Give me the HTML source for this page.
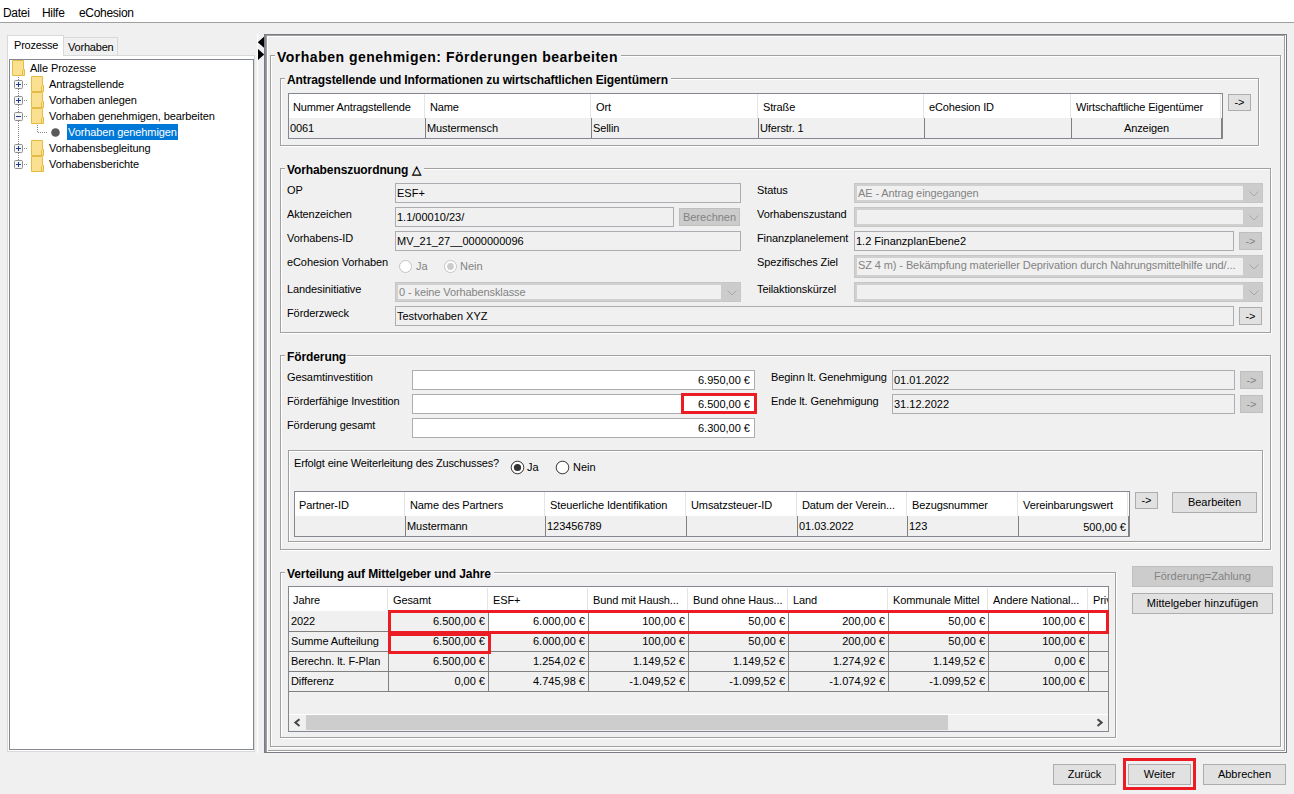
<!DOCTYPE html>
<html><head><meta charset="utf-8"><title>eCohesion</title>
<style>
html,body{margin:0;padding:0;}
body{width:1294px;height:794px;position:relative;overflow:hidden;background:#f0f0f0;font-family:"Liberation Sans",sans-serif;font-size:11px;color:#000;}
.a{position:absolute;}
.t{line-height:12px;white-space:nowrap;}
svg{display:block;}
</style></head><body>
<div class="a" style="left:0px;top:0px;width:1294px;height:22px;background:#ffffff;"></div>
<div class="a" style="left:0px;top:22px;width:1294px;height:1px;background:#a0a0a0;"></div>
<div class="a t" style="left:3px;top:7px;font-size:12px;letter-spacing:-0.3px;">Datei</div>
<div class="a t" style="left:42px;top:7px;font-size:12px;letter-spacing:-0.3px;">Hilfe</div>
<div class="a t" style="left:79px;top:7px;font-size:12px;letter-spacing:-0.3px;">eCohesion</div>
<div class="a" style="left:7px;top:55px;width:248px;height:697px;background:#ffffff;border:1px solid #d9d9d9;box-sizing:border-box;"></div>
<div class="a" style="left:63px;top:37px;width:55px;height:19px;background:#f0f0f0;border:1px solid #d9d9d9;box-sizing:border-box;"></div>
<div class="a" style="left:7px;top:35px;width:57px;height:21px;background:#ffffff;border:1px solid #d9d9d9;box-sizing:border-box;border-bottom:none;"></div>
<div class="a t" style="left:14px;top:39px;letter-spacing:-0.2px;">Prozesse</div>
<div class="a t" style="left:68px;top:41px;letter-spacing:-0.2px;">Vorhaben</div>
<div class="a" style="left:9px;top:59px;width:245px;height:691px;background:#ffffff;border:1px solid #828790;box-sizing:border-box;"></div>
<svg class="a" style="left:12px;top:60px" width="13" height="16"><path d="M0.5 0.5 H11.5 V9.5 H12.5 V15.5 H0.5 Z" fill="#fbe08f" stroke="#e3bb45"/><path d="M10.5 10 V15" stroke="#e3bb45"/></svg>
<div class="a t" style="left:30px;top:62px;letter-spacing:-0.1px;">Alle Prozesse</div>
<div class="a" style="left:18px;top:77px;width:1px;height:1px;background:#8a8a8a;"></div>
<div class="a" style="left:18px;top:79px;width:1px;height:1px;background:#8a8a8a;"></div>
<div class="a" style="left:18px;top:81px;width:1px;height:1px;background:#8a8a8a;"></div>
<div class="a" style="left:18px;top:83px;width:1px;height:1px;background:#8a8a8a;"></div>
<div class="a" style="left:18px;top:85px;width:1px;height:1px;background:#8a8a8a;"></div>
<div class="a" style="left:18px;top:87px;width:1px;height:1px;background:#8a8a8a;"></div>
<div class="a" style="left:18px;top:89px;width:1px;height:1px;background:#8a8a8a;"></div>
<div class="a" style="left:18px;top:91px;width:1px;height:1px;background:#8a8a8a;"></div>
<div class="a" style="left:18px;top:93px;width:1px;height:1px;background:#8a8a8a;"></div>
<div class="a" style="left:18px;top:95px;width:1px;height:1px;background:#8a8a8a;"></div>
<div class="a" style="left:18px;top:97px;width:1px;height:1px;background:#8a8a8a;"></div>
<div class="a" style="left:18px;top:99px;width:1px;height:1px;background:#8a8a8a;"></div>
<div class="a" style="left:18px;top:101px;width:1px;height:1px;background:#8a8a8a;"></div>
<div class="a" style="left:18px;top:103px;width:1px;height:1px;background:#8a8a8a;"></div>
<div class="a" style="left:18px;top:105px;width:1px;height:1px;background:#8a8a8a;"></div>
<div class="a" style="left:18px;top:107px;width:1px;height:1px;background:#8a8a8a;"></div>
<div class="a" style="left:18px;top:109px;width:1px;height:1px;background:#8a8a8a;"></div>
<div class="a" style="left:18px;top:111px;width:1px;height:1px;background:#8a8a8a;"></div>
<div class="a" style="left:18px;top:113px;width:1px;height:1px;background:#8a8a8a;"></div>
<div class="a" style="left:18px;top:115px;width:1px;height:1px;background:#8a8a8a;"></div>
<div class="a" style="left:18px;top:117px;width:1px;height:1px;background:#8a8a8a;"></div>
<div class="a" style="left:18px;top:119px;width:1px;height:1px;background:#8a8a8a;"></div>
<div class="a" style="left:18px;top:121px;width:1px;height:1px;background:#8a8a8a;"></div>
<div class="a" style="left:18px;top:123px;width:1px;height:1px;background:#8a8a8a;"></div>
<div class="a" style="left:18px;top:125px;width:1px;height:1px;background:#8a8a8a;"></div>
<div class="a" style="left:18px;top:127px;width:1px;height:1px;background:#8a8a8a;"></div>
<div class="a" style="left:18px;top:129px;width:1px;height:1px;background:#8a8a8a;"></div>
<div class="a" style="left:18px;top:131px;width:1px;height:1px;background:#8a8a8a;"></div>
<div class="a" style="left:18px;top:133px;width:1px;height:1px;background:#8a8a8a;"></div>
<div class="a" style="left:18px;top:135px;width:1px;height:1px;background:#8a8a8a;"></div>
<div class="a" style="left:18px;top:137px;width:1px;height:1px;background:#8a8a8a;"></div>
<div class="a" style="left:18px;top:139px;width:1px;height:1px;background:#8a8a8a;"></div>
<div class="a" style="left:18px;top:141px;width:1px;height:1px;background:#8a8a8a;"></div>
<div class="a" style="left:18px;top:143px;width:1px;height:1px;background:#8a8a8a;"></div>
<div class="a" style="left:18px;top:145px;width:1px;height:1px;background:#8a8a8a;"></div>
<div class="a" style="left:18px;top:147px;width:1px;height:1px;background:#8a8a8a;"></div>
<div class="a" style="left:18px;top:149px;width:1px;height:1px;background:#8a8a8a;"></div>
<div class="a" style="left:18px;top:151px;width:1px;height:1px;background:#8a8a8a;"></div>
<div class="a" style="left:18px;top:153px;width:1px;height:1px;background:#8a8a8a;"></div>
<div class="a" style="left:18px;top:155px;width:1px;height:1px;background:#8a8a8a;"></div>
<div class="a" style="left:18px;top:157px;width:1px;height:1px;background:#8a8a8a;"></div>
<div class="a" style="left:18px;top:159px;width:1px;height:1px;background:#8a8a8a;"></div>
<div class="a" style="left:18px;top:161px;width:1px;height:1px;background:#8a8a8a;"></div>
<div class="a" style="left:18px;top:163px;width:1px;height:1px;background:#8a8a8a;"></div>
<div class="a" style="left:18px;top:165px;width:1px;height:1px;background:#8a8a8a;"></div>
<svg class="a" style="left:14px;top:80px" width="9" height="9"><rect x="0.5" y="0.5" width="8" height="8" rx="1" fill="#f4f4f4" stroke="#8f8f8f"/><path d="M2 4.5 H7" stroke="#1e3a8a"/><path d="M4.5 2 V7" stroke="#1e3a8a"/></svg>
<div class="a" style="left:24px;top:84px;width:1px;height:1px;background:#8a8a8a;"></div>
<div class="a" style="left:26px;top:84px;width:1px;height:1px;background:#8a8a8a;"></div>
<svg class="a" style="left:31px;top:76px" width="13" height="16"><path d="M0.5 0.5 H11.5 V9.5 H12.5 V15.5 H0.5 Z" fill="#fbe08f" stroke="#e3bb45"/><path d="M10.5 10 V15" stroke="#e3bb45"/></svg>
<div class="a t" style="left:49px;top:78px;letter-spacing:-0.1px;">Antragstellende</div>
<svg class="a" style="left:14px;top:96px" width="9" height="9"><rect x="0.5" y="0.5" width="8" height="8" rx="1" fill="#f4f4f4" stroke="#8f8f8f"/><path d="M2 4.5 H7" stroke="#1e3a8a"/><path d="M4.5 2 V7" stroke="#1e3a8a"/></svg>
<div class="a" style="left:24px;top:100px;width:1px;height:1px;background:#8a8a8a;"></div>
<div class="a" style="left:26px;top:100px;width:1px;height:1px;background:#8a8a8a;"></div>
<svg class="a" style="left:31px;top:92px" width="13" height="16"><path d="M0.5 0.5 H11.5 V9.5 H12.5 V15.5 H0.5 Z" fill="#fbe08f" stroke="#e3bb45"/><path d="M10.5 10 V15" stroke="#e3bb45"/></svg>
<div class="a t" style="left:49px;top:94px;letter-spacing:-0.1px;">Vorhaben anlegen</div>
<svg class="a" style="left:14px;top:112px" width="9" height="9"><rect x="0.5" y="0.5" width="8" height="8" rx="1" fill="#f4f4f4" stroke="#8f8f8f"/><path d="M2 4.5 H7" stroke="#1e3a8a"/></svg>
<div class="a" style="left:24px;top:116px;width:1px;height:1px;background:#8a8a8a;"></div>
<div class="a" style="left:26px;top:116px;width:1px;height:1px;background:#8a8a8a;"></div>
<svg class="a" style="left:31px;top:108px" width="13" height="16"><path d="M0.5 0.5 H11.5 V9.5 H12.5 V15.5 H0.5 Z" fill="#fbe08f" stroke="#e3bb45"/><path d="M10.5 10 V15" stroke="#e3bb45"/></svg>
<div class="a t" style="left:49px;top:110px;letter-spacing:-0.1px;">Vorhaben genehmigen, bearbeiten</div>
<div class="a" style="left:37px;top:125px;width:1px;height:1px;background:#8a8a8a;"></div>
<div class="a" style="left:37px;top:127px;width:1px;height:1px;background:#8a8a8a;"></div>
<div class="a" style="left:37px;top:129px;width:1px;height:1px;background:#8a8a8a;"></div>
<div class="a" style="left:37px;top:131px;width:1px;height:1px;background:#8a8a8a;"></div>
<div class="a" style="left:38px;top:132px;width:1px;height:1px;background:#8a8a8a;"></div>
<div class="a" style="left:40px;top:132px;width:1px;height:1px;background:#8a8a8a;"></div>
<div class="a" style="left:42px;top:132px;width:1px;height:1px;background:#8a8a8a;"></div>
<div class="a" style="left:44px;top:132px;width:1px;height:1px;background:#8a8a8a;"></div>
<div class="a" style="left:46px;top:132px;width:1px;height:1px;background:#8a8a8a;"></div>
<svg class="a" style="left:50px;top:127px" width="11" height="11"><circle cx="5.5" cy="5.5" r="4.3" fill="#5a5a5a"/></svg>
<div class="a" style="left:67px;top:124px;width:111px;height:16px;background:#0078d7;"></div>
<div class="a t" style="left:68px;top:126px;color:#ffffff;letter-spacing:-0.1px;">Vorhaben genehmigen</div>
<svg class="a" style="left:14px;top:144px" width="9" height="9"><rect x="0.5" y="0.5" width="8" height="8" rx="1" fill="#f4f4f4" stroke="#8f8f8f"/><path d="M2 4.5 H7" stroke="#1e3a8a"/><path d="M4.5 2 V7" stroke="#1e3a8a"/></svg>
<div class="a" style="left:24px;top:148px;width:1px;height:1px;background:#8a8a8a;"></div>
<div class="a" style="left:26px;top:148px;width:1px;height:1px;background:#8a8a8a;"></div>
<svg class="a" style="left:31px;top:140px" width="13" height="16"><path d="M0.5 0.5 H11.5 V9.5 H12.5 V15.5 H0.5 Z" fill="#fbe08f" stroke="#e3bb45"/><path d="M10.5 10 V15" stroke="#e3bb45"/></svg>
<div class="a t" style="left:49px;top:142px;letter-spacing:-0.1px;">Vorhabensbegleitung</div>
<svg class="a" style="left:14px;top:160px" width="9" height="9"><rect x="0.5" y="0.5" width="8" height="8" rx="1" fill="#f4f4f4" stroke="#8f8f8f"/><path d="M2 4.5 H7" stroke="#1e3a8a"/><path d="M4.5 2 V7" stroke="#1e3a8a"/></svg>
<div class="a" style="left:24px;top:164px;width:1px;height:1px;background:#8a8a8a;"></div>
<div class="a" style="left:26px;top:164px;width:1px;height:1px;background:#8a8a8a;"></div>
<svg class="a" style="left:31px;top:156px" width="13" height="16"><path d="M0.5 0.5 H11.5 V9.5 H12.5 V15.5 H0.5 Z" fill="#fbe08f" stroke="#e3bb45"/><path d="M10.5 10 V15" stroke="#e3bb45"/></svg>
<div class="a t" style="left:49px;top:158px;letter-spacing:-0.1px;">Vorhabensberichte</div>
<div class="a" style="left:257px;top:34px;width:1px;height:719px;background:#ffffff;"></div>
<svg class="a" style="left:257px;top:36px" width="8" height="25"><path d="M0.8 6.3 L7 0.8 V11.8 Z" fill="#000"/><path d="M1 12.9 V23.9 L7.2 18.4 Z" fill="#000"/></svg>
<div class="a" style="left:264px;top:34px;width:1px;height:719px;background:#7a7a82;"></div>
<div class="a" style="left:264px;top:34px;width:1023px;height:1px;background:#7a7a82;"></div>
<div class="a" style="left:1286px;top:34px;width:1px;height:719px;background:#7a7a82;"></div>
<div class="a" style="left:264px;top:752px;width:1023px;height:1px;background:#7a7a82;"></div>
<div class="a" style="left:266px;top:36px;width:1020px;height:1px;background:#ffffff;"></div>
<div class="a" style="left:266px;top:751px;width:1020px;height:1px;background:#ffffff;"></div>
<div class="a" style="left:266px;top:36px;width:1px;height:716px;background:#ffffff;"></div>
<div class="a" style="left:1285px;top:36px;width:1px;height:716px;background:#ffffff;"></div>
<div class="a" style="left:265px;top:35px;width:1020px;height:1px;background:#a0a0a0;"></div>
<div class="a" style="left:265px;top:750px;width:1020px;height:1px;background:#a0a0a0;"></div>
<div class="a" style="left:265px;top:35px;width:1px;height:716px;background:#a0a0a0;"></div>
<div class="a" style="left:1284px;top:35px;width:1px;height:716px;background:#a0a0a0;"></div>
<div class="a" style="left:265px;top:35px;width:1px;height:717px;background:#8c8c94;"></div>
<div class="a" style="left:266px;top:36px;width:1px;height:716px;background:#a0a0a0;"></div>
<div class="a" style="left:267px;top:37px;width:1px;height:714px;background:#ffffff;"></div>
<div class="a" style="left:271px;top:56px;width:4px;height:1px;background:#ffffff;"></div>
<div class="a" style="left:621px;top:56px;width:661px;height:1px;background:#ffffff;"></div>
<div class="a" style="left:271px;top:747px;width:1011px;height:1px;background:#ffffff;"></div>
<div class="a" style="left:271px;top:56px;width:1px;height:692px;background:#ffffff;"></div>
<div class="a" style="left:1281px;top:56px;width:1px;height:692px;background:#ffffff;"></div>
<div class="a" style="left:270px;top:55px;width:5px;height:1px;background:#a0a0a0;"></div>
<div class="a" style="left:621px;top:55px;width:660px;height:1px;background:#a0a0a0;"></div>
<div class="a" style="left:270px;top:746px;width:1011px;height:1px;background:#a0a0a0;"></div>
<div class="a" style="left:270px;top:55px;width:1px;height:692px;background:#a0a0a0;"></div>
<div class="a" style="left:1280px;top:55px;width:1px;height:692px;background:#a0a0a0;"></div>
<div class="a t" style="left:277px;top:51px;font-size:14px;font-weight:bold;letter-spacing:0.5px;line-height:13px;">Vorhaben genehmigen: Förderungen bearbeiten</div>
<div class="a" style="left:281px;top:79px;width:4px;height:1px;background:#ffffff;"></div>
<div class="a" style="left:671px;top:79px;width:589px;height:1px;background:#ffffff;"></div>
<div class="a" style="left:281px;top:146px;width:979px;height:1px;background:#ffffff;"></div>
<div class="a" style="left:281px;top:79px;width:1px;height:68px;background:#ffffff;"></div>
<div class="a" style="left:1259px;top:79px;width:1px;height:68px;background:#ffffff;"></div>
<div class="a" style="left:280px;top:78px;width:5px;height:1px;background:#a0a0a0;"></div>
<div class="a" style="left:671px;top:78px;width:588px;height:1px;background:#a0a0a0;"></div>
<div class="a" style="left:280px;top:145px;width:979px;height:1px;background:#a0a0a0;"></div>
<div class="a" style="left:280px;top:78px;width:1px;height:68px;background:#a0a0a0;"></div>
<div class="a" style="left:1258px;top:78px;width:1px;height:68px;background:#a0a0a0;"></div>
<div class="a t" style="left:287px;top:74px;font-size:12px;font-weight:bold;letter-spacing:-0.1px;">Antragstellende und Informationen zu wirtschaftlichen Eigentümern</div>
<div class="a" style="left:288px;top:93px;width:935px;height:46px;background:#f0f0f0;border:1px solid #828790;box-sizing:border-box;"></div>
<div class="a" style="left:289px;top:94px;width:933px;height:24px;background:#ffffff;"></div>
<div class="a t" style="left:293px;top:101px;letter-spacing:-0.15px;">Nummer Antragstellende</div>
<div class="a t" style="left:290px;top:122px;letter-spacing:-0.1px;">0061</div>
<div class="a" style="left:424px;top:94px;width:1px;height:24px;background:#e5e5e5;"></div>
<div class="a" style="left:425px;top:118px;width:1px;height:20px;background:#808080;"></div>
<div class="a t" style="left:430px;top:101px;letter-spacing:-0.15px;">Name</div>
<div class="a t" style="left:427px;top:122px;letter-spacing:-0.1px;">Mustermensch</div>
<div class="a" style="left:590px;top:94px;width:1px;height:24px;background:#e5e5e5;"></div>
<div class="a" style="left:591px;top:118px;width:1px;height:20px;background:#808080;"></div>
<div class="a t" style="left:596px;top:101px;letter-spacing:-0.15px;">Ort</div>
<div class="a t" style="left:593px;top:122px;letter-spacing:-0.1px;">Sellin</div>
<div class="a" style="left:757px;top:94px;width:1px;height:24px;background:#e5e5e5;"></div>
<div class="a" style="left:758px;top:118px;width:1px;height:20px;background:#808080;"></div>
<div class="a t" style="left:763px;top:101px;letter-spacing:-0.15px;">Straße</div>
<div class="a t" style="left:760px;top:122px;letter-spacing:-0.1px;">Uferstr. 1</div>
<div class="a" style="left:923px;top:94px;width:1px;height:24px;background:#e5e5e5;"></div>
<div class="a" style="left:924px;top:118px;width:1px;height:20px;background:#808080;"></div>
<div class="a t" style="left:929px;top:101px;letter-spacing:-0.15px;">eCohesion ID</div>
<div class="a" style="left:1070px;top:94px;width:1px;height:24px;background:#e5e5e5;"></div>
<div class="a" style="left:1071px;top:118px;width:1px;height:20px;background:#808080;"></div>
<div class="a t" style="left:1076px;top:101px;letter-spacing:-0.15px;">Wirtschaftliche Eigentümer</div>
<div class="a t" style="left:1071px;width:151px;top:122px;text-align:center;letter-spacing:-0.1px;">Anzeigen</div>
<div class="a" style="left:1220px;top:94px;width:1px;height:24px;background:#e5e5e5;"></div>
<div class="a" style="left:1221px;top:118px;width:1px;height:20px;background:#808080;"></div>
<div class="a" style="left:1228px;top:94px;width:23px;height:17px;background:#e1e1e1;border:1px solid #adadad;box-sizing:border-box;"></div>
<div class="a t" style="left:1228px;width:23px;top:96px;text-align:center;">-&gt;</div>
<div class="a" style="left:281px;top:169px;width:4px;height:1px;background:#ffffff;"></div>
<div class="a" style="left:424px;top:169px;width:848px;height:1px;background:#ffffff;"></div>
<div class="a" style="left:281px;top:333px;width:991px;height:1px;background:#ffffff;"></div>
<div class="a" style="left:281px;top:169px;width:1px;height:165px;background:#ffffff;"></div>
<div class="a" style="left:1271px;top:169px;width:1px;height:165px;background:#ffffff;"></div>
<div class="a" style="left:280px;top:168px;width:5px;height:1px;background:#a0a0a0;"></div>
<div class="a" style="left:424px;top:168px;width:847px;height:1px;background:#a0a0a0;"></div>
<div class="a" style="left:280px;top:332px;width:991px;height:1px;background:#a0a0a0;"></div>
<div class="a" style="left:280px;top:168px;width:1px;height:165px;background:#a0a0a0;"></div>
<div class="a" style="left:1270px;top:168px;width:1px;height:165px;background:#a0a0a0;"></div>
<div class="a t" style="left:287px;top:164px;font-size:12px;font-weight:bold;letter-spacing:-0.1px;">Vorhabenszuordnung △</div>
<div class="a t" style="left:287px;top:184px;letter-spacing:-0.1px;">OP</div>
<div class="a t" style="left:287px;top:208px;letter-spacing:-0.1px;">Aktenzeichen</div>
<div class="a t" style="left:287px;top:232px;letter-spacing:-0.1px;">Vorhabens-ID</div>
<div class="a t" style="left:287px;top:256px;letter-spacing:-0.1px;">eCohesion Vorhaben</div>
<div class="a t" style="left:287px;top:283px;letter-spacing:-0.1px;">Landesinitiative</div>
<div class="a t" style="left:287px;top:307px;letter-spacing:-0.1px;">Förderzweck</div>
<div class="a" style="left:395px;top:183px;width:346px;height:20px;background:#f0f0f0;border:1px solid #abadb3;box-sizing:border-box;"></div>
<div class="a t" style="left:397px;top:187px;">ESF+</div>
<div class="a" style="left:395px;top:207px;width:279px;height:20px;background:#f0f0f0;border:1px solid #abadb3;box-sizing:border-box;"></div>
<div class="a t" style="left:397px;top:211px;">1.1/00010/23/</div>
<div class="a" style="left:679px;top:208px;width:61px;height:18px;background:#cccccc;border:1px solid #bfbfbf;box-sizing:border-box;"></div>
<div class="a t" style="left:679px;width:61px;top:211px;text-align:center;color:#838383;">Berechnen</div>
<div class="a" style="left:395px;top:231px;width:346px;height:20px;background:#f0f0f0;border:1px solid #abadb3;box-sizing:border-box;"></div>
<div class="a t" style="left:397px;top:235px;">MV_21_27__0000000096</div>
<svg class="a" style="left:398px;top:259px" width="15" height="15"><circle cx="7.5" cy="7.5" r="6" fill="#ffffff" stroke="#c4c4c4"/></svg>
<div class="a t" style="left:416px;top:260px;color:#838383;">Ja</div>
<svg class="a" style="left:443px;top:259px" width="15" height="15"><circle cx="7.5" cy="7.5" r="6" fill="#ffffff" stroke="#c4c4c4"/><circle cx="7.5" cy="7.5" r="3.4" fill="#cccccc"/></svg>
<div class="a t" style="left:460px;top:260px;color:#838383;">Nein</div>
<div class="a" style="left:395px;top:282px;width:346px;height:20px;background:#cccccc;border:1px solid #c6c6c6;box-sizing:border-box;"></div>
<div class="a" style="left:396px;top:283px;width:325px;height:18px;background:#d0d0d0;"></div>
<div class="a" style="left:398px;top:285px;width:323px;height:14px;background:#f0f0f0;"></div>
<svg class="a" style="left:727px;top:290px" width="10" height="6"><path d="M0.5 0.5 L5 5 L9.5 0.5" stroke="#a6a6a6" fill="none" stroke-width="1"/></svg>
<div class="a t" style="left:399px;top:286px;color:#838383;letter-spacing:-0.1px;">0 - keine Vorhabensklasse</div>
<div class="a" style="left:395px;top:306px;width:839px;height:20px;background:#f0f0f0;border:1px solid #abadb3;box-sizing:border-box;"></div>
<div class="a t" style="left:397px;top:310px;">Testvorhaben XYZ</div>
<div class="a" style="left:1239px;top:307px;width:23px;height:18px;background:#e1e1e1;border:1px solid #adadad;box-sizing:border-box;"></div>
<div class="a t" style="left:1239px;width:23px;top:310px;text-align:center;">-&gt;</div>
<div class="a t" style="left:757px;top:184px;letter-spacing:-0.1px;">Status</div>
<div class="a t" style="left:757px;top:208px;letter-spacing:-0.1px;">Vorhabenszustand</div>
<div class="a t" style="left:757px;top:232px;letter-spacing:-0.1px;">Finanzplanelement</div>
<div class="a t" style="left:757px;top:256px;letter-spacing:-0.1px;">Spezifisches Ziel</div>
<div class="a t" style="left:757px;top:283px;letter-spacing:-0.1px;">Teilaktionskürzel</div>
<div class="a" style="left:854px;top:183px;width:409px;height:20px;background:#cccccc;border:1px solid #c6c6c6;box-sizing:border-box;"></div>
<div class="a" style="left:855px;top:184px;width:388px;height:18px;background:#d0d0d0;"></div>
<div class="a" style="left:857px;top:186px;width:386px;height:14px;background:#f0f0f0;"></div>
<svg class="a" style="left:1249px;top:191px" width="10" height="6"><path d="M0.5 0.5 L5 5 L9.5 0.5" stroke="#a6a6a6" fill="none" stroke-width="1"/></svg>
<div class="a t" style="left:858px;top:187px;color:#838383;letter-spacing:-0.1px;">AE - Antrag eingegangen</div>
<div class="a" style="left:854px;top:207px;width:409px;height:20px;background:#cccccc;border:1px solid #c6c6c6;box-sizing:border-box;"></div>
<div class="a" style="left:855px;top:208px;width:388px;height:18px;background:#d0d0d0;"></div>
<div class="a" style="left:857px;top:210px;width:386px;height:14px;background:#f0f0f0;"></div>
<svg class="a" style="left:1249px;top:215px" width="10" height="6"><path d="M0.5 0.5 L5 5 L9.5 0.5" stroke="#a6a6a6" fill="none" stroke-width="1"/></svg>
<div class="a" style="left:854px;top:231px;width:380px;height:20px;background:#f0f0f0;border:1px solid #abadb3;box-sizing:border-box;"></div>
<div class="a t" style="left:856px;top:235px;">1.2 FinanzplanEbene2</div>
<div class="a" style="left:1239px;top:232px;width:23px;height:18px;background:#cccccc;border:1px solid #bfbfbf;box-sizing:border-box;"></div>
<div class="a t" style="left:1239px;width:23px;top:235px;text-align:center;color:#838383;">-&gt;</div>
<div class="a" style="left:854px;top:255px;width:409px;height:23px;background:#cccccc;border:1px solid #c6c6c6;box-sizing:border-box;"></div>
<div class="a" style="left:855px;top:256px;width:388px;height:21px;background:#d0d0d0;"></div>
<div class="a" style="left:857px;top:258px;width:386px;height:17px;background:#f0f0f0;"></div>
<svg class="a" style="left:1249px;top:264px" width="10" height="6"><path d="M0.5 0.5 L5 5 L9.5 0.5" stroke="#a6a6a6" fill="none" stroke-width="1"/></svg>
<div class="a t" style="left:858px;top:259px;color:#838383;letter-spacing:-0.1px;">SZ 4 m) - Bekämpfung materieller Deprivation durch Nahrungsmittelhilfe und/...</div>
<div class="a" style="left:854px;top:282px;width:409px;height:20px;background:#cccccc;border:1px solid #c6c6c6;box-sizing:border-box;"></div>
<div class="a" style="left:855px;top:283px;width:388px;height:18px;background:#d0d0d0;"></div>
<div class="a" style="left:857px;top:285px;width:386px;height:14px;background:#f0f0f0;"></div>
<svg class="a" style="left:1249px;top:290px" width="10" height="6"><path d="M0.5 0.5 L5 5 L9.5 0.5" stroke="#a6a6a6" fill="none" stroke-width="1"/></svg>
<div class="a" style="left:281px;top:356px;width:4px;height:1px;background:#ffffff;"></div>
<div class="a" style="left:347px;top:356px;width:925px;height:1px;background:#ffffff;"></div>
<div class="a" style="left:281px;top:550px;width:991px;height:1px;background:#ffffff;"></div>
<div class="a" style="left:281px;top:356px;width:1px;height:195px;background:#ffffff;"></div>
<div class="a" style="left:1271px;top:356px;width:1px;height:195px;background:#ffffff;"></div>
<div class="a" style="left:280px;top:355px;width:5px;height:1px;background:#a0a0a0;"></div>
<div class="a" style="left:347px;top:355px;width:924px;height:1px;background:#a0a0a0;"></div>
<div class="a" style="left:280px;top:549px;width:991px;height:1px;background:#a0a0a0;"></div>
<div class="a" style="left:280px;top:355px;width:1px;height:195px;background:#a0a0a0;"></div>
<div class="a" style="left:1270px;top:355px;width:1px;height:195px;background:#a0a0a0;"></div>
<div class="a t" style="left:287px;top:351px;font-size:12px;font-weight:bold;letter-spacing:-0.1px;">Förderung</div>
<div class="a t" style="left:287px;top:371px;letter-spacing:-0.1px;">Gesamtinvestition</div>
<div class="a t" style="left:287px;top:395px;letter-spacing:-0.1px;">Förderfähige Investition</div>
<div class="a t" style="left:287px;top:419px;letter-spacing:-0.1px;">Förderung gesamt</div>
<div class="a" style="left:412px;top:370px;width:343px;height:20px;background:#ffffff;border:1px solid #abadb3;box-sizing:border-box;"></div>
<div class="a t" style="right:544px;top:374px;">6.950,00 €</div>
<div class="a" style="left:412px;top:394px;width:343px;height:20px;background:#ffffff;border:1px solid #abadb3;box-sizing:border-box;"></div>
<div class="a t" style="right:544px;top:398px;">6.500,00 €</div>
<div class="a" style="left:412px;top:418px;width:343px;height:20px;background:#ffffff;border:1px solid #abadb3;box-sizing:border-box;"></div>
<div class="a t" style="right:544px;top:422px;">6.300,00 €</div>
<div class="a" style="left:681px;top:393px;width:76px;height:21px;border:3px solid #ec1c24;box-sizing:border-box;"></div>
<div class="a t" style="left:771px;top:371px;letter-spacing:-0.1px;">Beginn lt. Genehmigung</div>
<div class="a t" style="left:771px;top:395px;letter-spacing:-0.1px;">Ende lt. Genehmigung</div>
<div class="a" style="left:892px;top:370px;width:343px;height:20px;background:#f0f0f0;border:1px solid #abadb3;box-sizing:border-box;"></div>
<div class="a t" style="left:894px;top:374px;">01.01.2022</div>
<div class="a" style="left:892px;top:394px;width:343px;height:20px;background:#f0f0f0;border:1px solid #abadb3;box-sizing:border-box;"></div>
<div class="a t" style="left:894px;top:398px;">31.12.2022</div>
<div class="a" style="left:1240px;top:371px;width:23px;height:18px;background:#cccccc;border:1px solid #bfbfbf;box-sizing:border-box;"></div>
<div class="a t" style="left:1240px;width:23px;top:374px;text-align:center;color:#838383;">-&gt;</div>
<div class="a" style="left:1240px;top:395px;width:23px;height:18px;background:#cccccc;border:1px solid #bfbfbf;box-sizing:border-box;"></div>
<div class="a t" style="left:1240px;width:23px;top:398px;text-align:center;color:#838383;">-&gt;</div>
<div class="a" style="left:289px;top:451px;width:975px;height:1px;background:#ffffff;"></div>
<div class="a" style="left:289px;top:542px;width:975px;height:1px;background:#ffffff;"></div>
<div class="a" style="left:289px;top:451px;width:1px;height:92px;background:#ffffff;"></div>
<div class="a" style="left:1263px;top:451px;width:1px;height:92px;background:#ffffff;"></div>
<div class="a" style="left:288px;top:450px;width:975px;height:1px;background:#a0a0a0;"></div>
<div class="a" style="left:288px;top:541px;width:975px;height:1px;background:#a0a0a0;"></div>
<div class="a" style="left:288px;top:450px;width:1px;height:92px;background:#a0a0a0;"></div>
<div class="a" style="left:1262px;top:450px;width:1px;height:92px;background:#a0a0a0;"></div>
<div class="a t" style="left:294px;top:457px;letter-spacing:-0.15px;">Erfolgt eine Weiterleitung des Zuschusses?</div>
<svg class="a" style="left:510px;top:460px" width="15" height="15"><circle cx="7.5" cy="7.5" r="6.3" fill="#ffffff" stroke="#333333"/><circle cx="7.5" cy="7.5" r="3.6" fill="#333333"/></svg>
<div class="a t" style="left:527px;top:461px;">Ja</div>
<svg class="a" style="left:555px;top:460px" width="15" height="15"><circle cx="7.5" cy="7.5" r="6.3" fill="#ffffff" stroke="#333333"/></svg>
<div class="a t" style="left:573px;top:461px;">Nein</div>
<div class="a" style="left:294px;top:491px;width:836px;height:46px;background:#f0f0f0;border:1px solid #828790;box-sizing:border-box;"></div>
<div class="a" style="left:295px;top:492px;width:834px;height:24px;background:#ffffff;"></div>
<div class="a t" style="left:299px;top:499px;letter-spacing:-0.1px;">Partner-ID</div>
<div class="a" style="left:404px;top:492px;width:1px;height:24px;background:#e5e5e5;"></div>
<div class="a" style="left:405px;top:516px;width:1px;height:20px;background:#808080;"></div>
<div class="a t" style="left:410px;top:499px;letter-spacing:-0.1px;">Name des Partners</div>
<div class="a t" style="left:407px;top:520px;letter-spacing:-0.05px;">Mustermann</div>
<div class="a" style="left:544px;top:492px;width:1px;height:24px;background:#e5e5e5;"></div>
<div class="a" style="left:545px;top:516px;width:1px;height:20px;background:#808080;"></div>
<div class="a t" style="left:550px;top:499px;letter-spacing:-0.1px;">Steuerliche Identifikation</div>
<div class="a t" style="left:547px;top:520px;letter-spacing:-0.05px;">123456789</div>
<div class="a" style="left:685px;top:492px;width:1px;height:24px;background:#e5e5e5;"></div>
<div class="a" style="left:686px;top:516px;width:1px;height:20px;background:#808080;"></div>
<div class="a t" style="left:691px;top:499px;letter-spacing:-0.1px;">Umsatzsteuer-ID</div>
<div class="a" style="left:796px;top:492px;width:1px;height:24px;background:#e5e5e5;"></div>
<div class="a" style="left:797px;top:516px;width:1px;height:20px;background:#808080;"></div>
<div class="a t" style="left:802px;top:499px;letter-spacing:-0.1px;">Datum der Verein...</div>
<div class="a t" style="left:799px;top:520px;letter-spacing:-0.05px;">01.03.2022</div>
<div class="a" style="left:906px;top:492px;width:1px;height:24px;background:#e5e5e5;"></div>
<div class="a" style="left:907px;top:516px;width:1px;height:20px;background:#808080;"></div>
<div class="a t" style="left:912px;top:499px;letter-spacing:-0.1px;">Bezugsnummer</div>
<div class="a t" style="left:909px;top:520px;letter-spacing:-0.05px;">123</div>
<div class="a" style="left:1017px;top:492px;width:1px;height:24px;background:#e5e5e5;"></div>
<div class="a" style="left:1018px;top:516px;width:1px;height:20px;background:#808080;"></div>
<div class="a t" style="left:1023px;top:499px;letter-spacing:-0.1px;">Vereinbarungswert</div>
<div class="a t" style="right:168px;top:521px;">500,00 €</div>
<div class="a" style="left:1127px;top:492px;width:1px;height:24px;background:#e5e5e5;"></div>
<div class="a" style="left:1128px;top:516px;width:1px;height:20px;background:#808080;"></div>
<div class="a" style="left:1135px;top:492px;width:23px;height:17px;background:#e1e1e1;border:1px solid #adadad;box-sizing:border-box;"></div>
<div class="a t" style="left:1135px;width:23px;top:494px;text-align:center;">-&gt;</div>
<div class="a" style="left:1172px;top:492px;width:85px;height:21px;background:#e1e1e1;border:1px solid #adadad;box-sizing:border-box;"></div>
<div class="a t" style="left:1172px;width:85px;top:496px;text-align:center;">Bearbeiten</div>
<div class="a" style="left:281px;top:573px;width:4px;height:1px;background:#ffffff;"></div>
<div class="a" style="left:494px;top:573px;width:623px;height:1px;background:#ffffff;"></div>
<div class="a" style="left:281px;top:738px;width:836px;height:1px;background:#ffffff;"></div>
<div class="a" style="left:281px;top:573px;width:1px;height:166px;background:#ffffff;"></div>
<div class="a" style="left:1116px;top:573px;width:1px;height:166px;background:#ffffff;"></div>
<div class="a" style="left:280px;top:572px;width:5px;height:1px;background:#a0a0a0;"></div>
<div class="a" style="left:494px;top:572px;width:622px;height:1px;background:#a0a0a0;"></div>
<div class="a" style="left:280px;top:737px;width:836px;height:1px;background:#a0a0a0;"></div>
<div class="a" style="left:280px;top:572px;width:1px;height:166px;background:#a0a0a0;"></div>
<div class="a" style="left:1115px;top:572px;width:1px;height:166px;background:#a0a0a0;"></div>
<div class="a t" style="left:287px;top:568px;font-size:12px;font-weight:bold;letter-spacing:-0.1px;">Verteilung auf Mittelgeber und Jahre</div>
<div class="a" style="left:288px;top:586px;width:821px;height:146px;background:#f0f0f0;border:1px solid #828790;box-sizing:border-box;"></div>
<div class="a" style="left:289px;top:587px;width:819px;height:24px;background:#ffffff;"></div>
<div class="a" style="left:489px;top:611px;width:619px;height:20px;background:#ffffff;"></div>
<div class="a" style="left:289px;top:631px;width:819px;height:1px;background:#808080;"></div>
<div class="a" style="left:289px;top:651px;width:819px;height:1px;background:#808080;"></div>
<div class="a" style="left:289px;top:671px;width:819px;height:1px;background:#808080;"></div>
<div class="a" style="left:289px;top:691px;width:819px;height:1px;background:#808080;"></div>
<div class="a t" style="left:293px;top:594px;width:95px;overflow:hidden;letter-spacing:-0.1px">Jahre</div>
<div class="a" style="left:387px;top:588px;width:1px;height:23px;background:#e5e5e5;"></div>
<div class="a" style="left:388px;top:611px;width:1px;height:81px;background:#808080;"></div>
<div class="a t" style="left:393px;top:594px;width:95px;overflow:hidden;letter-spacing:-0.1px">Gesamt</div>
<div class="a" style="left:487px;top:588px;width:1px;height:23px;background:#e5e5e5;"></div>
<div class="a" style="left:488px;top:611px;width:1px;height:81px;background:#808080;"></div>
<div class="a t" style="left:493px;top:594px;width:95px;overflow:hidden;letter-spacing:-0.1px">ESF+</div>
<div class="a" style="left:587px;top:588px;width:1px;height:23px;background:#e5e5e5;"></div>
<div class="a" style="left:588px;top:611px;width:1px;height:81px;background:#808080;"></div>
<div class="a t" style="left:593px;top:594px;width:95px;overflow:hidden;letter-spacing:-0.1px">Bund mit Haush...</div>
<div class="a" style="left:687px;top:588px;width:1px;height:23px;background:#e5e5e5;"></div>
<div class="a" style="left:688px;top:611px;width:1px;height:81px;background:#808080;"></div>
<div class="a t" style="left:693px;top:594px;width:95px;overflow:hidden;letter-spacing:-0.1px">Bund ohne Haus...</div>
<div class="a" style="left:787px;top:588px;width:1px;height:23px;background:#e5e5e5;"></div>
<div class="a" style="left:788px;top:611px;width:1px;height:81px;background:#808080;"></div>
<div class="a t" style="left:793px;top:594px;width:95px;overflow:hidden;letter-spacing:-0.1px">Land</div>
<div class="a" style="left:887px;top:588px;width:1px;height:23px;background:#e5e5e5;"></div>
<div class="a" style="left:888px;top:611px;width:1px;height:81px;background:#808080;"></div>
<div class="a t" style="left:893px;top:594px;width:95px;overflow:hidden;letter-spacing:-0.1px">Kommunale Mittel</div>
<div class="a" style="left:987px;top:588px;width:1px;height:23px;background:#e5e5e5;"></div>
<div class="a" style="left:988px;top:611px;width:1px;height:81px;background:#808080;"></div>
<div class="a t" style="left:993px;top:594px;width:95px;overflow:hidden;letter-spacing:-0.1px">Andere National...</div>
<div class="a" style="left:1087px;top:588px;width:1px;height:23px;background:#e5e5e5;"></div>
<div class="a" style="left:1088px;top:611px;width:1px;height:81px;background:#808080;"></div>
<div class="a t" style="left:1093px;top:594px;width:15px;overflow:hidden;letter-spacing:-0.1px">Priv</div>
<div class="a t" style="left:291px;top:615px;letter-spacing:-0.1px;">2022</div>
<div class="a t" style="right:809px;top:615px;">6.500,00 €</div>
<div class="a t" style="right:709px;top:615px;">6.000,00 €</div>
<div class="a t" style="right:609px;top:615px;">100,00 €</div>
<div class="a t" style="right:509px;top:615px;">50,00 €</div>
<div class="a t" style="right:409px;top:615px;">200,00 €</div>
<div class="a t" style="right:309px;top:615px;">50,00 €</div>
<div class="a t" style="right:209px;top:615px;">100,00 €</div>
<div class="a t" style="left:291px;top:635px;letter-spacing:-0.1px;">Summe Aufteilung</div>
<div class="a t" style="right:809px;top:635px;">6.500,00 €</div>
<div class="a t" style="right:709px;top:635px;">6.000,00 €</div>
<div class="a t" style="right:609px;top:635px;">100,00 €</div>
<div class="a t" style="right:509px;top:635px;">50,00 €</div>
<div class="a t" style="right:409px;top:635px;">200,00 €</div>
<div class="a t" style="right:309px;top:635px;">50,00 €</div>
<div class="a t" style="right:209px;top:635px;">100,00 €</div>
<div class="a t" style="left:291px;top:655px;letter-spacing:-0.1px;">Berechn. lt. F-Plan</div>
<div class="a t" style="right:809px;top:655px;">6.500,00 €</div>
<div class="a t" style="right:709px;top:655px;">1.254,02 €</div>
<div class="a t" style="right:609px;top:655px;">1.149,52 €</div>
<div class="a t" style="right:509px;top:655px;">1.149,52 €</div>
<div class="a t" style="right:409px;top:655px;">1.274,92 €</div>
<div class="a t" style="right:309px;top:655px;">1.149,52 €</div>
<div class="a t" style="right:209px;top:655px;">0,00 €</div>
<div class="a t" style="left:291px;top:675px;letter-spacing:-0.1px;">Differenz</div>
<div class="a t" style="right:809px;top:675px;">0,00 €</div>
<div class="a t" style="right:709px;top:675px;">4.745,98 €</div>
<div class="a t" style="right:609px;top:675px;">-1.049,52 €</div>
<div class="a t" style="right:509px;top:675px;">-1.099,52 €</div>
<div class="a t" style="right:409px;top:675px;">-1.074,92 €</div>
<div class="a t" style="right:309px;top:675px;">-1.099,52 €</div>
<div class="a t" style="right:209px;top:675px;">100,00 €</div>
<div class="a" style="left:289px;top:715px;width:819px;height:16px;background:#f0f0f0;"></div>
<div class="a" style="left:289px;top:714px;width:819px;height:1px;background:#ffffff;"></div>
<div class="a" style="left:306px;top:715px;width:642px;height:15px;background:#cdcdcd;"></div>
<svg class="a" style="left:293px;top:718px" width="8" height="10"><path d="M6.5 1.2 L2.3 4.6 L6.5 8" stroke="#4a4a4a" fill="none" stroke-width="2"/></svg>
<svg class="a" style="left:1095px;top:718px" width="8" height="10"><path d="M2.5 1.2 L6.7 4.6 L2.5 8" stroke="#4a4a4a" fill="none" stroke-width="2"/></svg>
<div class="a" style="left:388px;top:610px;width:721px;height:24px;border:3px solid #ec1c24;box-sizing:border-box;"></div>
<div class="a" style="left:388px;top:633px;width:103px;height:21px;border:3px solid #ec1c24;box-sizing:border-box;"></div>
<div class="a" style="left:1132px;top:566px;width:141px;height:21px;background:#cccccc;border:1px solid #bfbfbf;box-sizing:border-box;"></div>
<div class="a t" style="left:1132px;width:141px;top:570px;text-align:center;color:#838383;">Förderung=Zahlung</div>
<div class="a" style="left:1132px;top:593px;width:141px;height:21px;background:#e1e1e1;border:1px solid #adadad;box-sizing:border-box;"></div>
<div class="a t" style="left:1132px;width:141px;top:597px;text-align:center;">Mittelgeber hinzufügen</div>
<div class="a" style="left:1053px;top:764px;width:63px;height:21px;background:#e1e1e1;border:1px solid #adadad;box-sizing:border-box;"></div>
<div class="a t" style="left:1053px;width:63px;top:768px;text-align:center;">Zurück</div>
<div class="a" style="left:1128px;top:764px;width:63px;height:21px;background:#e1e1e1;border:1px solid #adadad;box-sizing:border-box;"></div>
<div class="a t" style="left:1128px;width:63px;top:768px;text-align:center;">Weiter</div>
<div class="a" style="left:1203px;top:764px;width:83px;height:21px;background:#e1e1e1;border:1px solid #adadad;box-sizing:border-box;"></div>
<div class="a t" style="left:1203px;width:83px;top:768px;text-align:center;">Abbrechen</div>
<div class="a" style="left:1123px;top:758px;width:73px;height:32px;border:3px solid #ec1c24;box-sizing:border-box;"></div>
</body></html>
